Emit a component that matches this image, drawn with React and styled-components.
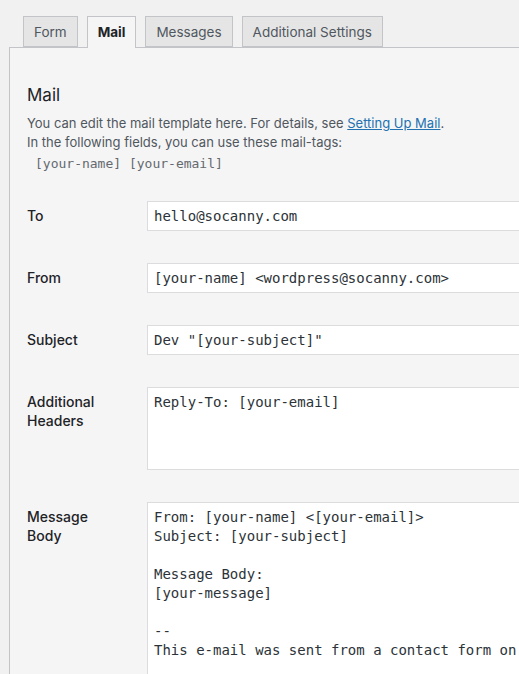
import React from "react";
import styled, { createGlobalStyle } from "styled-components";

const Global = createGlobalStyle`
  html, body { margin: 0; padding: 0; background: #f1f1f1; }
  body { overflow: hidden; width: 519px; height: 674px; font-family: Inter, "Noto Sans", sans-serif; color: #3c434a; }
  * { box-sizing: border-box; }
`;

const Page = styled.div`
  padding: 16px 0 0 9px;
  width: 640px;
`;

const TabBar = styled.nav`
  display: flex;
  gap: 9px;
  padding-left: 14px;
  height: 31px;
  position: relative;
  z-index: 1;
`;

const Tab = styled.div`
  height: ${(p) => (p.$active ? "32px" : "31px")};
  padding: 0 10px;
  display: flex;
  align-items: center;
  font-size: 13.5px;
  font-weight: ${(p) => (p.$active ? 700 : 400)};
  color: ${(p) => (p.$active ? "#1d2327" : "#50575e")};
  background: ${(p) => (p.$active ? "#f5f5f5" : "#e5e5e5")};
  border: 1px solid #c3c4c7;
  border-bottom: ${(p) => (p.$active ? "none" : "1px solid #c3c4c7")};
  padding-bottom: ${(p) => (p.$active ? "1px" : "0")};
`;

const Panel = styled.section`
  background: #f5f5f5;
  border: 1px solid #c3c4c7;
  border-right: none;
  padding: 35px 0 0 17px;
  min-height: 640px;
`;

const Heading = styled.h2`
  margin: 0;
  font-size: 17px;
  font-weight: 400;
  color: #1d2327;
  line-height: 24px;
`;

const Desc = styled.p`
  margin: 7px 0 0 0;
  font-size: 13px;
  line-height: 19px;
  color: #50575e;
`;

const Link = styled.a`
  color: #2271b1;
  text-decoration: underline;
`;

const Tags = styled.div`
  font-family: "DejaVu Sans Mono", "Liberation Mono", monospace;
  font-size: 13px;
  line-height: 19px;
  color: #646970;
  padding-left: 8px;
  margin-top: 2px;
`;

const Form = styled.div`
  margin-top: 28px;
  display: flex;
  flex-direction: column;
  gap: 32px;
`;

const Row = styled.div`
  display: grid;
  grid-template-columns: 120px 1fr;
  align-items: start;
`;

const Label = styled.label`
  font-size: 14px;
  font-weight: 500;
  line-height: 19px;
  color: #1d2327;
  padding-top: 5px;
`;

const Field = styled.div`
  background: #fff;
  border: 1px solid #dcdcde;
  height: ${(p) => p.$h}px;
  padding: 5px 6px 0 6px;
  font-family: "DejaVu Sans Mono", "Liberation Mono", monospace;
  font-size: 14px;
  line-height: 19px;
  color: #2c3338;
  white-space: pre;
  overflow: hidden;
`;

const body = `From: [your-name] <[your-email]>
Subject: [your-subject]

Message Body:
[your-message]

--
This e-mail was sent from a contact form on`;

export default function App() {
  return (
    <>
      <Global />
      <Page>
        <TabBar>
          <Tab>Form</Tab>
          <Tab $active>Mail</Tab>
          <Tab>Messages</Tab>
          <Tab>Additional Settings</Tab>
        </TabBar>
        <Panel>
          <Heading>Mail</Heading>
          <Desc>
            You can edit the mail template here. For details, see <Link>Setting Up Mail</Link>.
            <br />
            In the following fields, you can use these mail-tags:
          </Desc>
          <Tags>[your-name] [your-email]</Tags>
          <Form>
            <Row>
              <Label>To</Label>
              <Field $h={30}>hello@socanny.com</Field>
            </Row>
            <Row>
              <Label>From</Label>
              <Field $h={30}>{"[your-name] <wordpress@socanny.com>"}</Field>
            </Row>
            <Row>
              <Label>Subject</Label>
              <Field $h={30}>{'Dev "[your-subject]"'}</Field>
            </Row>
            <Row>
              <Label>
                Additional
                <br />
                Headers
              </Label>
              <Field $h={83}>Reply-To: [your-email]</Field>
            </Row>
            <Row>
              <Label>
                Message
                <br />
                Body
              </Label>
              <Field $h={300}>{body}</Field>
            </Row>
          </Form>
        </Panel>
      </Page>
    </>
  );
}
